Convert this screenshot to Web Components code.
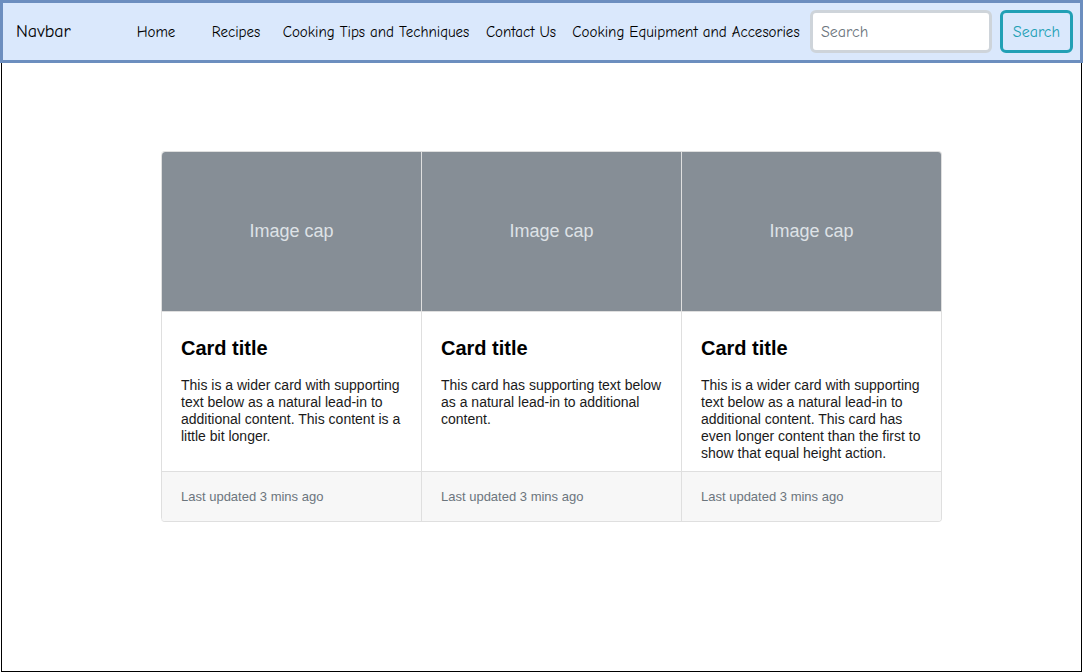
<!DOCTYPE html>
<html lang="en">
<head>
<meta charset="utf-8">
<meta name="viewport" content="width=device-width, initial-scale=1">
<title>Cooking</title>
<style>
  body {
    margin: 0;
    min-height: 100vh;
    display: flex;
    flex-direction: column;
    background: #fff;
    color: #000;
    font-family: "Liberation Sans", Arial, sans-serif;
    --nav-font: "Comic Sans MS", "Comic Neue", "Open Sans", sans-serif;
  }
</style>
</head>
<body>
<site-navbar>
  <span slot="brand">Navbar</span>
  <nav-link href="#home">Home</nav-link>
  <nav-link href="#recipes">Recipes</nav-link>
  <nav-link href="#tips">Cooking Tips and Techniques</nav-link>
  <nav-link href="#contact">Contact Us</nav-link>
  <nav-link href="#equipment">Cooking Equipment and Accesories</nav-link>
  <search-form slot="search"></search-form>
</site-navbar>
<page-frame>
  <card-group>
    <info-card>
      <span slot="image">Image cap</span>
      <span slot="title">Card title</span>
      This is a wider card with supporting text below as a natural lead-in to additional content. This content is a little bit longer.
      <span slot="footer">Last updated 3 mins ago</span>
    </info-card>
    <info-card>
      <span slot="image">Image cap</span>
      <span slot="title">Card title</span>
      This card has supporting text below as a natural lead-in to additional content.
      <span slot="footer">Last updated 3 mins ago</span>
    </info-card>
    <info-card>
      <span slot="image">Image cap</span>
      <span slot="title">Card title</span>
      This is a wider card with supporting text below as a natural lead-in to additional content. This card has even longer content than the first to show that equal height action.
      <span slot="footer">Last updated 3 mins ago</span>
    </info-card>
  </card-group>
</page-frame>

<template id="site-navbar">
  <style>
    :host { display: block; font-family: var(--nav-font); }
    header {
      display: flex;
      align-items: center;
      padding: 7px 7px 7px 13px;
      border: 3px solid #6c8ebf;
      background: #dae8fc;
    }
    .brand { flex: 0 0 100px; font-size: 18px; line-height: 20px; color: #000; text-decoration: none; }
    nav {
      flex: 1;
      display: grid;
      grid-template-columns: 80fr 80fr 200fr 90fr 240fr;
      margin-right: 4px;
    }
  </style>
  <header>
    <a class="brand" href="#"><slot name="brand"></slot></a>
    <nav><slot></slot></nav>
    <slot name="search"></slot>
  </header>
</template>

<template id="nav-link">
  <style>
    :host { display: block; text-align: center; }
    a { font-size: 15px; line-height: 20px; white-space: nowrap; color: #000; text-decoration: none; }
  </style>
  <a><slot></slot></a>
</template>

<template id="search-form">
  <style>
    :host { display: block; }
    form { display: flex; gap: 8px; }
    input, button {
      box-sizing: border-box;
      height: 43px;
      margin: 0;
      border: 3px solid #ced4da;
      border-radius: 6px;
      font-family: inherit;
      font-size: 16px;
      line-height: 20px;
    }
    input { width: 182px; padding: 0 8px; background: #fff; color: #495057; }
    input::placeholder { color: #6c757d; opacity: 1; }
    button { width: 73px; padding: 0; border-color: #21a0b5; background: transparent; color: #21a0b5; }
  </style>
  <form>
    <input type="search" placeholder="Search" aria-label="Search">
    <button type="button">Search</button>
  </form>
</template>

<template id="page-frame">
  <style>
    :host { flex: 1; display: flex; margin: 0 1px; }
    main { flex: 1; padding: 88px 139px 88px 159px; border: 1px solid #000; border-top: 0; }
  </style>
  <main><slot></slot></main>
</template>

<template id="card-group">
  <style>
    :host {
      display: grid;
      grid-template-columns: repeat(3, 1fr);
      border: 1px solid #dfdfdf;
      border-left: 0;
      border-radius: 4px;
      overflow: hidden;
    }
    ::slotted(:first-child) { border-radius: 4px 0 0 4px; }
  </style>
  <slot></slot>
</template>

<template id="info-card">
  <style>
    :host { display: flex; flex-direction: column; border-left: 1px solid #dfdfdf; overflow: hidden; }
    .image {
      display: flex;
      align-items: center;
      justify-content: center;
      height: 159px;
      border-bottom: 1px solid #dfdfdf;
      background: #868e96;
      color: #dee2e6;
      font-size: 18px;
    }
    .body { flex: 1; padding: 24px 19px 9px; }
    h2 { margin: 0 0 17px; font-size: 20px; line-height: 24px; }
    p { margin: 0; font-size: 14px; line-height: 17px; color: #1a1a1a; }
    footer {
      padding: 16px 19px;
      border-top: 1px solid #dfdfdf;
      background: #f7f7f7;
      color: #6c757d;
      font-size: 13px;
      line-height: 17px;
    }
  </style>
  <div class="image"><slot name="image"></slot></div>
  <div class="body">
    <h2><slot name="title"></slot></h2>
    <p><slot></slot></p>
  </div>
  <footer><slot name="footer"></slot></footer>
</template>

<script>
  class TemplateElement extends HTMLElement {
    constructor() {
      super();
      const template = document.getElementById(this.localName);
      this.attachShadow({ mode: "open" }).append(template.content.cloneNode(true));
    }
  }
  class SiteNavbar extends TemplateElement {}
  class NavLink extends TemplateElement {
    connectedCallback() {
      this.shadowRoot.querySelector("a").href = this.getAttribute("href");
    }
  }
  class SearchForm extends TemplateElement {}
  class PageFrame extends TemplateElement {}
  class CardGroup extends TemplateElement {}
  class InfoCard extends TemplateElement {}

  customElements.define("site-navbar", SiteNavbar);
  customElements.define("nav-link", NavLink);
  customElements.define("search-form", SearchForm);
  customElements.define("page-frame", PageFrame);
  customElements.define("card-group", CardGroup);
  customElements.define("info-card", InfoCard);
</script>
</body>
</html>
